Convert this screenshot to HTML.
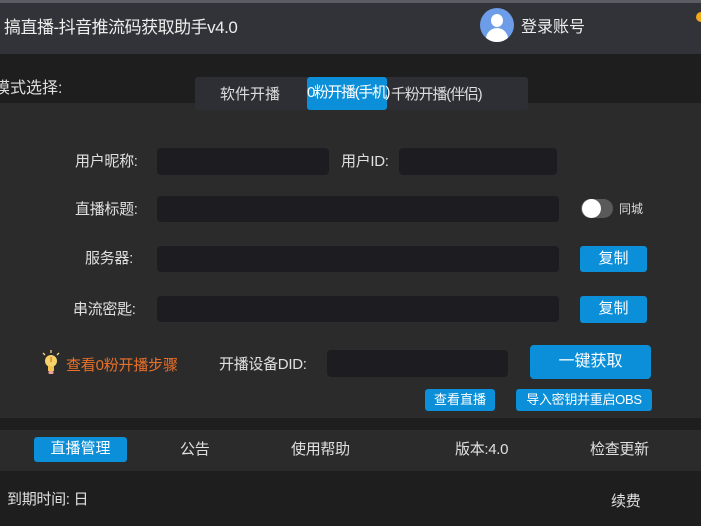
<!DOCTYPE html>
<html><head><meta charset="utf-8"><style>
*{margin:0;padding:0;box-sizing:border-box}
body{width:701px;height:526px;overflow:hidden;background:#1e1e1e;font-family:"Liberation Sans","Noto Sans CJK SC",sans-serif;color:#e6e6e6;position:relative}
.a{position:absolute;white-space:nowrap}
.in{position:absolute;background:#1d1d21;border-radius:4px}
.btn{position:absolute;background:#0a8fd8;border-radius:3px;color:#fff;text-align:center;white-space:nowrap}
.lb{position:absolute;font-size:15px;color:#e0e0e0;white-space:nowrap;letter-spacing:-0.3px}
</style></head><body>
<div class="a" style="left:0;top:0;width:701px;height:3px;background:#5a5d64"></div>
<div class="a" style="left:0;top:3px;width:701px;height:51px;background:#323338"></div>
<div class="a" style="left:4px;top:13px;font-size:17px;color:#eee;letter-spacing:-0.5px">搞直播-抖音推流码获取助手v4.0</div>
<div class="a" style="left:480px;top:8px;width:34px;height:34px;border-radius:50%;background:#6d9de8;overflow:hidden">
<div class="a" style="left:11px;top:6px;width:12px;height:13px;border-radius:50%;background:#fff"></div>
<div class="a" style="left:6px;top:20px;width:22px;height:14px;border-radius:11px 11px 2px 2px;background:#fff"></div></div>
<div class="a" style="left:521px;top:13px;font-size:16px;color:#eee">登录账号</div>
<div class="a" style="left:696px;top:12px;width:10px;height:10px;border-radius:50%;background:#f0a81c"></div>
<div class="a" style="left:0;top:103px;width:701px;height:315px;background:#2b2b2b"></div>
<div class="a" style="left:-6px;top:74px;font-size:16px;color:#ddd">模式选择:</div>
<div class="a" style="left:195px;top:77px;width:333px;height:33px;background:#2e2f34;border-radius:3px"></div>
<div class="a" style="left:220px;top:83px;font-size:15px;color:#ddd">软件开播</div>
<div class="btn" style="left:307px;top:77px;width:80px;height:33px;line-height:32px;font-size:15px;letter-spacing:-1.4px">0粉开播(手机)</div>
<div class="a" style="left:391px;top:83px;font-size:15px;color:#ddd;letter-spacing:-1.2px">千粉开播(伴侣)</div>
<div class="lb" style="left:75px;top:150px">用户昵称:</div>
<div class="in" style="left:157px;top:148px;width:172px;height:27px"></div>
<div class="lb" style="left:341px;top:150px">用户ID:</div>
<div class="in" style="left:399px;top:148px;width:158px;height:27px"></div>
<div class="lb" style="left:75px;top:198px">直播标题:</div>
<div class="in" style="left:157px;top:196px;width:402px;height:26px"></div>
<div class="a" style="left:581px;top:199px;width:32px;height:19px;border-radius:10px;background:#5a5a5a"></div>
<div class="a" style="left:582px;top:199px;width:19px;height:19px;border-radius:50%;background:#fff"></div>
<div class="a" style="left:619px;top:200px;font-size:12px;color:#ddd">同城</div>
<div class="lb" style="left:85px;top:247px">服务器:</div>
<div class="in" style="left:157px;top:246px;width:402px;height:26px"></div>
<div class="btn" style="left:580px;top:246px;width:67px;height:26px;line-height:25px;font-size:15px">复制</div>
<div class="lb" style="left:73px;top:298px">串流密匙:</div>
<div class="in" style="left:157px;top:296px;width:402px;height:26px"></div>
<div class="btn" style="left:580px;top:296px;width:67px;height:27px;line-height:26px;font-size:15px">复制</div>
<svg class="a" style="left:40px;top:350px" width="22" height="26" viewBox="0 0 22 26"><g stroke="#f4d27a" stroke-width="1.3"><line x1="11" y1="0" x2="11" y2="3"/><line x1="3" y1="3" x2="5" y2="5"/><line x1="19" y1="3" x2="17" y2="5"/></g><circle cx="11" cy="11" r="6" fill="#f7d26a"/><rect x="8" y="16" width="6" height="5" fill="#f2c350"/><rect x="8.5" y="21" width="5" height="3" rx="1" fill="#f0a0a0"/><rect x="10.3" y="7" width="1.6" height="5" fill="#e08a2a"/></svg>
<div class="a" style="left:66px;top:354px;font-size:15px;color:#e8702a;letter-spacing:-0.2px">查看0粉开播步骤</div>
<div class="lb" style="left:219px;top:353px">开播设备DID:</div>
<div class="in" style="left:327px;top:350px;width:181px;height:27px"></div>
<div class="btn" style="left:530px;top:345px;width:121px;height:34px;line-height:33px;font-size:16px;border-radius:4px">一键获取</div>
<div class="btn" style="left:425px;top:389px;width:70px;height:22px;line-height:21px;font-size:13px">查看直播</div>
<div class="btn" style="left:516px;top:389px;width:136px;height:22px;line-height:21px;font-size:13px;letter-spacing:-0.3px">导入密钥并重启OBS</div>
<div class="a" style="left:0;top:418px;width:701px;height:12px;background:#1e1e1e"></div>
<div class="a" style="left:0;top:430px;width:701px;height:41px;background:#2b2b2b"></div>
<div class="btn" style="left:34px;top:437px;width:93px;height:25px;line-height:24px;font-size:15px">直播管理</div>
<div class="lb" style="left:180px;top:438px">公告</div>
<div class="lb" style="left:291px;top:438px">使用帮助</div>
<div class="lb" style="left:455px;top:438px">版本:4.0</div>
<div class="lb" style="left:590px;top:438px">检查更新</div>
<div class="lb" style="left:7px;top:488px">到期时间: 日</div>
<div class="lb" style="left:611px;top:490px">续费</div>
</body></html>
